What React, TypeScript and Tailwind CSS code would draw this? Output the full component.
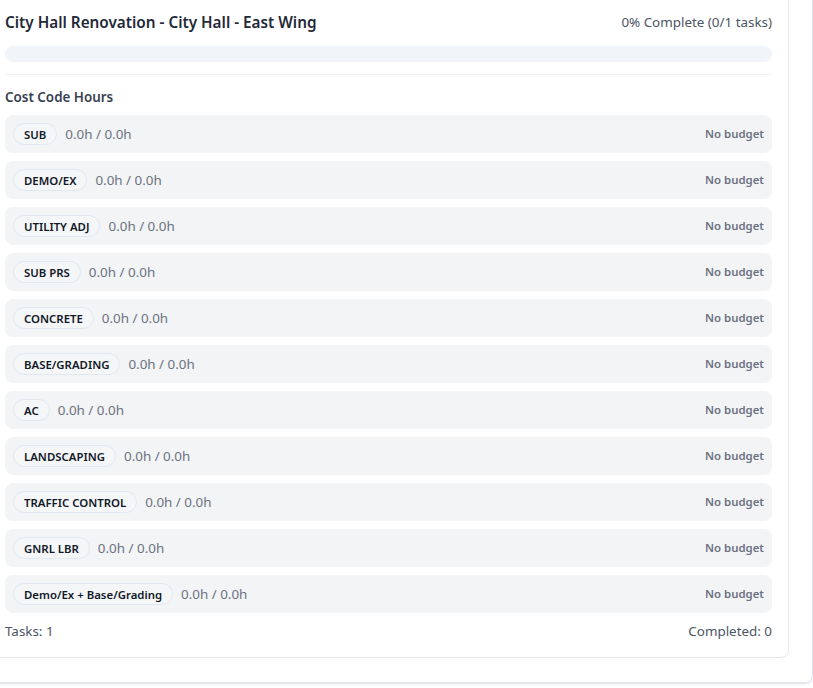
import React from "react";

const codes = [
  "SUB",
  "DEMO/EX",
  "UTILITY ADJ",
  "SUB PRS",
  "CONCRETE",
  "BASE/GRADING",
  "AC",
  "LANDSCAPING",
  "TRAFFIC CONTROL",
  "GNRL LBR",
  "Demo/Ex + Base/Grading",
];

export default function App() {
  return (
    <div
      className="w-[813px] h-[688px] overflow-hidden bg-white"
      style={{ fontFamily: '"Noto Sans", "Open Sans", sans-serif' }}
    >
      <div className="ml-[-37px] mt-[-32px] w-[850px] border border-[#dfe5ee] rounded-lg pl-6 pr-[23px] pt-6 pb-6 shadow-sm">
        <div className="border border-[#e5e7eb] rounded-lg p-4 bg-white">
          <div className="flex items-center justify-between mb-3 h-6">
            <h3 className="text-[15.3px] font-semibold text-[#1f2937] leading-6 h-6">
              City Hall Renovation - City Hall - East Wing
            </h3>
            <span className="text-[13.4px] leading-5 text-[#4b5563] h-5">0% Complete (0/1 tasks)</span>
          </div>
          <div className="h-4 rounded-full bg-[#f1f5f9]"></div>
          <div className="mt-3 border-t border-[#f1f2f4] pt-3">
            <div className="text-[13.4px] leading-5 font-semibold text-[#374151] mb-2 h-5">Cost Code Hours</div>
            <div className="flex flex-col gap-2">
              {codes.map((c) => (
                <div
                  key={c}
                  className="flex items-center justify-between bg-[#f3f4f6] rounded-lg px-2 py-2 h-[38px]"
                >
                  <div className="flex items-center gap-2">
                    <span className="rounded-full border border-[#e2e8f0] bg-[#f5f6f8] px-2.5 pt-[2.5px] pb-[1.5px] h-[22px] text-[11.4px] leading-4 font-semibold text-[#111827]">
                      {c}
                    </span>
                    <span className="text-[13.4px] leading-5 h-5 text-[#6b7280]">0.0h / 0.0h</span>
                  </div>
                  <span className="text-[11.4px] leading-4 h-4 font-semibold text-[#6b7280]">No budget</span>
                </div>
              ))}
            </div>
          </div>
          <div className="mt-2 flex items-center justify-between text-[13.4px] leading-5 h-5 text-[#4b5563]">
            <span className="h-5">Tasks: 1</span>
            <span className="h-5">Completed: 0</span>
          </div>
        </div>
      </div>
    </div>
  );
}
